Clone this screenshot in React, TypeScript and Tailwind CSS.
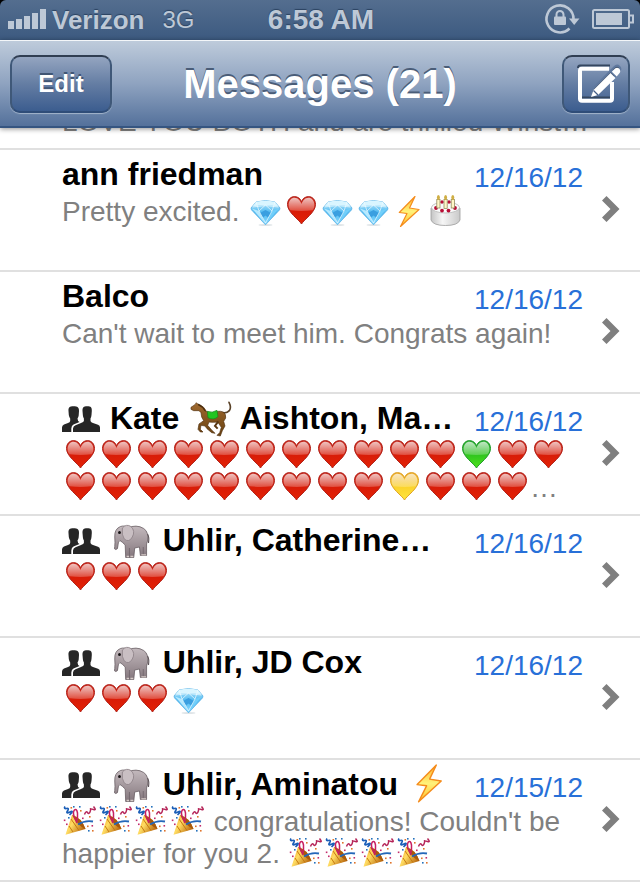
import React from "react";

type Conversation = {
  name: string;
  group?: boolean;
  date: string;
  preview: string;
};

const conversations: Conversation[] = [
  { name: "ann friedman", date: "12/16/12", preview: "Pretty excited. 💎❤💎💎⚡🎂" },
  { name: "Balco", date: "12/16/12", preview: "Can't wait to meet him. Congrats again!" },
  {
    name: "Kate 🐎 Aishton, Ma…",
    group: true,
    date: "12/16/12",
    preview: "❤❤❤❤❤❤❤❤❤❤❤💚❤❤❤❤❤❤❤❤❤❤❤💛❤❤❤…",
  },
  { name: "🐘 Uhlir, Catherine…", group: true, date: "12/16/12", preview: "❤❤❤" },
  { name: "🐘 Uhlir, JD Cox", group: true, date: "12/16/12", preview: "❤❤❤💎" },
  {
    name: "🐘 Uhlir, Aminatou ⚡",
    group: true,
    date: "12/15/12",
    preview: "🎉🎉🎉🎉 congratulations! Couldn't be happier for you 2. 🎉🎉🎉🎉",
  },
];

function Gradients() {
  const vertical = { x1: "0", y1: "0", x2: "0", y2: "1" };
  return (
    <svg className="absolute h-0 w-0" aria-hidden="true">
      <defs>
        <linearGradient id="red" {...vertical}>
          <stop offset="0" stopColor="#c9271b" />
          <stop offset="0.5" stopColor="#d81c08" />
          <stop offset="1" stopColor="#e32205" />
        </linearGradient>
        <linearGradient id="green" {...vertical}>
          <stop offset="0" stopColor="#22a82c" />
          <stop offset="0.5" stopColor="#2fc41f" />
          <stop offset="1" stopColor="#4ee21c" />
        </linearGradient>
        <linearGradient id="yellow" {...vertical}>
          <stop offset="0" stopColor="#eba722" />
          <stop offset="0.5" stopColor="#fbd22c" />
          <stop offset="1" stopColor="#ffe53c" />
        </linearGradient>
        <linearGradient id="gloss" {...vertical}>
          <stop offset="0" stopColor="#fff" stopOpacity="0.72" />
          <stop offset="1" stopColor="#fff" stopOpacity="0.22" />
        </linearGradient>
        <linearGradient id="bolt" {...vertical}>
          <stop offset="0" stopColor="#ffb52e" />
          <stop offset="0.5" stopColor="#fff27a" />
          <stop offset="1" stopColor="#ffc02c" />
        </linearGradient>
        <linearGradient id="gem" {...vertical}>
          <stop offset="0" stopColor="#c8f0ff" />
          <stop offset="0.5" stopColor="#4fb9f0" />
          <stop offset="1" stopColor="#8edcff" />
        </linearGradient>
        <linearGradient id="cake" x1="0" y1="0" x2="1" y2="0">
          <stop offset="0" stopColor="#c4c4c4" />
          <stop offset="0.4" stopColor="#f6f6f6" />
          <stop offset="1" stopColor="#c9c9c9" />
        </linearGradient>
        <linearGradient id="cone" x1="0" y1="0" x2="1" y2="0.6">
          <stop offset="0" stopColor="#f09a1c" />
          <stop offset="0.45" stopColor="#ffdc62" />
          <stop offset="1" stopColor="#b8660c" />
        </linearGradient>
        <linearGradient id="hide" {...vertical}>
          <stop offset="0" stopColor="#c3b9bd" />
          <stop offset="1" stopColor="#84777d" />
        </linearGradient>
        <linearGradient id="horse" {...vertical}>
          <stop offset="0" stopColor="#a06a30" />
          <stop offset="1" stopColor="#68400f" />
        </linearGradient>
      </defs>
    </svg>
  );
}

function Heart({ fill, edge }: { fill: string; edge: string }) {
  return (
    <>
      <path
        d="M18.500 28C16 23.500 4.500 16.500 4.500 8.500C4.500 3.500 7.800.6 11.500.6C15 .6 17.500 2.800 18.500 5.800C19.500 2.800 22 .6 25.500.6C29.200.6 32.500 3.500 32.500 8.500C32.500 16.500 21 23.500 18.500 28Z"
        fill={fill}
        stroke={edge}
        strokeWidth="1"
      />
      <path
        d="M5.600 9C5.600 4.400 8.300 1.800 11.600 1.800C15 1.800 17.400 4.800 18.500 8C19.600 4.800 22 1.800 25.400 1.800C28.700 1.800 31.400 4.400 31.400 9C31.400 11.500 30.500 13.200 29.500 14.300Q18.500 15.500 7.500 14.300C6.500 13.200 5.600 11.500 5.600 9Z"
        fill="url(#gloss)"
      />
    </>
  );
}

function Gem() {
  return (
    <>
      <ellipse cx="18.500" cy="29" rx="7" ry="1" fill="#dfe4e7" />
      <path d="M9 6Q18.500 3 28 6L33 12Q33 14 31 15.500L18.500 28.800L6 15.500Q4 14 4 12Z" fill="url(#gem)" stroke="#4ba9e2" strokeWidth=".7" />
      <path d="M9 6Q18.500 3.500 28 6L31.500 10.500Q18.500 7.500 5.500 10.500Z" fill="#d9f5ff" />
      <path d="M5 12.500L12 15L17.500 26.500Z" fill="#b5e9ff" />
      <path d="M32 12.500L25 15L19.500 26.500Z" fill="#72cffa" />
      <path d="M13 17L18.500 14L24 17L21 21.500L18.500 19.500L16 21.500Z" fill="#3a9fe0" />
      <path d="M5.500 11Q18.500 8 31.500 11M9 6L12 15L18.500 9L25 15L28 6M12 15L18.500 27L25 15" fill="none" stroke="#effbff" strokeWidth=".7" />
    </>
  );
}

function Cake() {
  return (
    <>
      <path d="M4 12V24Q6 29.500 18.500 29.500Q31 29.500 33 24V12Z" fill="url(#cake)" stroke="#9c9c9c" strokeWidth=".8" />
      <ellipse cx="18.500" cy="11.500" rx="14" ry="5.500" fill="#fbfbfb" stroke="#b5b5b5" strokeWidth=".8" />
      <g fill="#b80d34">
        <circle cx="9" cy="12" r="1.900" />
        <circle cx="15" cy="14.600" r="1.900" />
        <circle cx="21.500" cy="14.600" r="1.900" />
        <circle cx="28" cy="12" r="1.900" />
        <circle cx="15" cy="6" r="1.700" />
        <circle cx="22" cy="6" r="1.700" />
      </g>
      <g fill="#fff6c7" stroke="#958d61" strokeWidth=".8">
        <rect x="9.800" y="3.500" width="3.200" height="8.500" />
        <rect x="17" y="3.500" width="3.200" height="9" />
        <rect x="24.200" y="3.500" width="3.200" height="8.500" />
      </g>
      <g fill="#cfae44">
        <ellipse cx="11.400" cy="1.500" rx="1.500" ry="2.500" />
        <ellipse cx="18.600" cy="1.500" rx="1.500" ry="2.500" />
        <ellipse cx="25.800" cy="1.500" rx="1.500" ry="2.500" />
      </g>
    </>
  );
}

function Popper() {
  return (
    <>
      <path d="M3.500 28.800L10 9Q19 11 23.500 23Z" fill="url(#cone)" />
      <path d="M10 9Q19 11 23.500 23Q17 21 10 9Z" fill="#a8590b" />
      <path d="M7 20L11 26M9 13L17 24.500" stroke="#c67810" strokeWidth="1" />
      <path d="M3 .5Q1.500 3 4.500 2.500T5.500 5T8 6T7.500 9" fill="none" stroke="#1c5fb8" strokeWidth="1.700" />
      <path d="M15 17Q10 8 12 4.500Q14.500 1.500 15.500 7Q16 11 14.500 17" fill="none" stroke="#c72060" strokeWidth="1.500" />
      <path d="M16 18.500Q23 14 31 15.500" fill="none" stroke="#2467b9" strokeWidth="1.800" />
      <path d="M22.500 8.500Q24 4.500 25.500 6.500T28 6T28.500 3T31.500 3.500T31.500.5" fill="none" stroke="#b52458" strokeWidth="1.500" />
      <g fill="#e0742c">
        <rect x="18" y="4" width="1.600" height="1.600" />
        <rect x="27" y="10" width="1.600" height="1.600" />
        <rect x="25" y="19.500" width="1.600" height="1.600" />
        <rect x="30" y="24" width="1.600" height="1.600" />
        <rect x="8.500" y="1" width="1.600" height="1.600" />
      </g>
      <g fill="#c32a6a">
        <rect x="1.800" y="13.500" width="1.600" height="1.600" />
        <rect x="29.500" y="19" width="1.600" height="1.600" />
        <rect x="20" y="11.500" width="1.600" height="1.600" />
        <rect x="4" y="17.500" width="1.600" height="1.600" />
      </g>
      <g fill="#2672bd">
        <rect x="11" y="0" width="1.600" height="1.600" />
        <rect x="17" y="0" width="1.600" height="1.600" />
        <rect x="26" y="24" width="1.600" height="1.600" />
        <rect x="6" y="11" width="1.600" height="1.600" />
      </g>
    </>
  );
}

function Bolt() {
  return (
    <path
      d="M24 .5L8.300 16.500L16 17.500L9.500 30.500L28 13.500L18.500 12Z"
      fill="url(#bolt)"
      stroke="#f58c1c"
      strokeWidth="1.200"
      strokeLinejoin="round"
    />
  );
}

function HorseArt() {
  return (
    <g transform="translate(-1 0) scale(.3333)">
      <path d="M108 44Q120 46 127 38Q134 28 126 13" fill="none" stroke="#5a4228" strokeWidth="5" strokeLinecap="round" />
      <path
        d="M28 14L32 18L38 20Q52 26 58 40Q64 44 75 46Q95 36 108 42Q118 48 116 60L110 70L114 84L106 98L100 114L90 112L98 104L103 88L92 72Q78 74 66 72L62 82L74 96L84 106L74 104L60 92L54 84L42 82L40 94L48 102L40 102L33 94L36 78L50 68Q42 58 42 44L36 38L20 38L12 34L12 28L24 20Z"
        fill="url(#horse)"
        stroke="#533413"
        strokeWidth="2"
      />
      <path d="M94 70L84 84L92 92" fill="none" stroke="#5a3713" strokeWidth="6" />
      <path d="M33 17Q50 23 58 42L52 38Q46 28 33 22Z" fill="#4a2c0d" />
      <path d="M61 40Q76 46 90 37L93 56Q80 68 63 59Z" fill="#22c522" stroke="#14851b" strokeWidth="2" />
    </g>
  );
}

function ElephantArt() {
  return (
    <g transform="scale(.95 1)">
      <path
        d="M18 8Q28 4 35.500 8.500Q41 12 39.500 21L38.500 24L38.500 35.500H32L31 27L26 28L25 37.500H16.500L16 25Q13 22 10.500 20.500Q8.500 21 8.300 26Q8.500 29.500 6 29.500Q4 29.500 5 26.500Q5.500 23 5 17Q4.500 9 11 6.500Q16 5 18 8Z"
        fill="url(#hide)"
        stroke="#665b61"
        strokeWidth=".8"
      />
      <path d="M39.500 14Q41.500 17 40.500 23" fill="none" stroke="#5f555a" strokeWidth="1.200" />
      <path d="M20.500 28V36.500M35 27V35" stroke="#6d6268" strokeWidth=".8" fill="none" />
      <path d="M13 8Q17 3.500 22 6.500Q27 11 23.500 17Q20 23 15 19Q12 15 13 8Z" fill="#c9bfc3" stroke="#8f8489" strokeWidth=".9" />
      <path d="M17.500 36.500H20M21.500 36.500H24.500M33 34.800H38" stroke="#d6ccc8" strokeWidth="1.300" />
      <circle cx="10" cy="12.500" r="1.500" fill="#171315" />
    </g>
  );
}

const symbols: Record<string, { label: string; art: React.ReactNode }> = {
  "❤": { label: "red heart", art: <Heart fill="url(#red)" edge="#b0221a" /> },
  "💚": { label: "green heart", art: <Heart fill="url(#green)" edge="#229a2c" /> },
  "💛": { label: "yellow heart", art: <Heart fill="url(#yellow)" edge="#dfa227" /> },
  "💎": { label: "gem", art: <Gem /> },
  "⚡": { label: "lightning", art: <Bolt /> },
  "🎂": { label: "birthday cake", art: <Cake /> },
  "🎉": { label: "party popper", art: <Popper /> },
  "🐎": { label: "horse", art: <HorseArt /> },
  "🐘": { label: "elephant", art: <ElephantArt /> },
};

const symbolPattern = new RegExp(`(${Object.keys(symbols).join("|")})`, "u");

function RichText({ text, large = false }: { text: string; large?: boolean }) {
  return (
    <>
      {text.split(symbolPattern).map((part, i) => {
        const symbol = symbols[part];
        if (!symbol) return part;
        const wide = part === "🐎" || part === "🐘";
        return (
          <svg
            key={i}
            role="img"
            aria-label={symbol.label}
            viewBox={wide ? "0 0 44 40" : "0 0 36 32"}
            className={`inline-block overflow-visible align-top ${large ? "h-10 w-11" : "h-8 w-9"}`}
          >
            {symbol.art}
          </svg>
        );
      })}
    </>
  );
}

function GroupIcon() {
  return (
    <svg role="img" aria-label="Group" viewBox="0 0 39 40" className="inline-block h-10 w-[39px] align-top" fill="#262626">
      <path d="M11.500 8.300C7.500 8.300 6.300 9.500 6.500 13L6.800 17Q7.200 19 8.200 20.500V23Q8 24.300 6 25L2 26.500Q0 27.300 0 29.500V34H9.300V30.500Q9.500 27.500 11.500 26.500L17.500 24Q15.500 23 15.500 20.500Q16.500 19 16.700 17.500L17 13C17.200 9.500 15.500 8.300 11.500 8.300Z" />
      <path d="M25.200 8.300C29 8.300 30 9.500 29.800 13L29.500 17Q29.300 19 28.500 20.500V23Q29 24.300 31 25L36 26.700Q38 27.500 38 29.500V34H11V30.500Q11.200 28.300 13.500 27.300L19 25Q21.700 24 21.900 23V20.500Q21 19 20.900 17.500L20.500 13C20.400 9.500 21.500 8.300 25.200 8.300Z" />
    </svg>
  );
}

function StatusBar() {
  return (
    <div className="bg-black">
      <div className="grid h-10 grid-cols-[1fr_auto_1fr] items-center rounded-t-md bg-linear-to-b from-[#546e8f] to-[#3c5a80] pr-1.5 pl-2 text-[#bdc8d6] [text-shadow:0_-1px_1px_#2b4260]">
        <div className="flex items-center">
          <svg viewBox="0 0 38 20" className="mb-0.5 h-5 w-[38px]" fill="currentColor" role="img" aria-label="Signal">
            <path d="M0 12h6v8H0zM8 10h6v10H8zM16 7h6v13h-6zM24 4h6v16h-6zM32 0h6v20h-6z" />
          </svg>
          <span className="ml-1.5 text-[26px] leading-10 font-bold">Verizon</span>
          <span className="ml-[18px] text-[24px] leading-10">3G</span>
        </div>
        <span className="text-[28px] leading-10 font-bold">6:58 AM</span>
        <div className="mb-0.5 flex items-center justify-end gap-3">
          <svg viewBox="0 0 34 32" className="h-8 w-[34px] overflow-visible" role="img" aria-label="Rotation lock">
            <path d="M23.500 25.500A13.500 13.500 0 1 1 27.500 16" fill="none" stroke="currentColor" strokeWidth="2.600" />
            <path d="M23 15.500H33.500L28.200 22Z" fill="currentColor" />
            <rect x="8" y="13.500" width="12" height="8.500" rx="1" fill="currentColor" />
            <path d="M10.500 14V11.500A3.500 3.500 0 0 1 17.500 11.500V14" fill="none" stroke="currentColor" strokeWidth="2" />
          </svg>
          <svg viewBox="0 0 42 20" className="h-5 w-[42px]" role="img" aria-label="Battery">
            <rect x="1" y="1" width="36" height="18" rx="1.500" fill="none" stroke="currentColor" strokeWidth="2" />
            <rect x="4" y="4" width="26" height="12" fill="currentColor" />
            <path d="M38 6.500H41V13.500H38" fill="none" stroke="currentColor" strokeWidth="2" />
          </svg>
        </div>
      </div>
    </div>
  );
}

const buttonStyle =
  "flex h-[58px] items-center justify-center rounded-[10px] border-2 border-t-[#303e52] border-x-[#3f5878] border-b-[#2f4d78] bg-linear-to-b from-[#94a5c0] via-[#647da3] to-[#3c5d8f] text-white shadow-[0_1px_1px_#a4b5cb]";

const pencil =
  "M17 33L19.500 26L36.500 9L41.500 14L24 31ZM37.800 7.700L40.500 5Q43 2.500 45.300 4.700Q47.500 7 45 9.700L42.700 12.600Z";

function NavBar() {
  return (
    <header className="relative z-10 grid h-[88px] grid-cols-[1fr_auto_1fr] items-center border-t border-b-2 border-t-[#f3f6f9] border-b-[#355581] bg-linear-to-b from-[#becbdb] via-[#8fa3c0] to-[#54719b] px-2.5 shadow-[0_1px_5px_#00000070]">
      <button className={`${buttonStyle} w-[102px] text-[24px] font-bold [text-shadow:0_-2px_0_#405674]`}>Edit</button>
      <h1 className="text-[40px] leading-[48px] font-bold text-white [text-shadow:0_-2px_0_#4a5d78]">Messages (21)</h1>
      <button aria-label="Compose" className={`${buttonStyle} w-[68px] justify-self-end`}>
        <svg viewBox="0 0 44 40" className="h-10 w-11 overflow-visible" fill="none">
          <path d="M4 4Q4 1.500 6 1.500H36M8 33.500H36" stroke="#34465f" strokeWidth="2" />
          <path d="M35 4.700H8Q6 4.700 6 6.700V34.700Q6 36.700 8 36.700H36Q38 36.700 38 34.700V18" stroke="white" strokeWidth="4" />
          <path d={pencil} fill="#34465f" stroke="#5f789e" strokeWidth="2" transform="translate(0 -2)" />
          <path d={pencil} fill="white" />
          <path d="M19.500 26.500L24 31" stroke="#425c86" strokeWidth="1.200" />
        </svg>
      </button>
    </header>
  );
}

function Row({ conversation }: { conversation: Conversation }) {
  const { name, group, date, preview } = conversation;
  return (
    <li className="border-b-2 border-[#e0e0e0]">
      <a href="#conversation" className="flex h-[120px] items-center pr-5 pl-[62px]">
        <div className="h-full min-w-0 flex-1 pt-1">
          <div className="flex justify-between">
            <h2 className="text-[32px] leading-10 font-bold whitespace-nowrap text-black">
              {group && (
                <>
                  <GroupIcon />{" "}
                </>
              )}
              <RichText text={name} large />
            </h2>
            <time className="h-10 pt-1 text-[28px] leading-10 text-[#2870d8]">{date}</time>
          </div>
          <p className="mt-0.5 text-[28px] leading-8 text-[#808080]">
            <RichText text={preview} />
          </p>
        </div>
        <svg viewBox="0 0 18 26" className="mb-0.5 ml-[19px] h-[26px] w-[18px]" fill="#7f7f7f" aria-hidden="true">
          <path d="M4.500 0L17.500 13L4.500 26L0 21.500L8.500 13L0 4.500Z" />
        </svg>
      </a>
    </li>
  );
}

export default function App() {
  return (
    <div className="min-h-screen bg-white font-['Liberation_Sans',Arial,sans-serif]">
      <Gradients />
      <StatusBar />
      <NavBar />
      <ul>
        <li className="flex h-[22px] items-end overflow-hidden border-b-2 border-[#e0e0e0] pb-2.5 pl-[62px]">
          <p className="text-[28px] leading-8 whitespace-nowrap text-[#808080]">LOVE YOU BOTH and are thrilled Winst…</p>
        </li>
        {conversations.map((conversation) => (
          <Row key={conversation.name} conversation={conversation} />
        ))}
      </ul>
    </div>
  );
}
